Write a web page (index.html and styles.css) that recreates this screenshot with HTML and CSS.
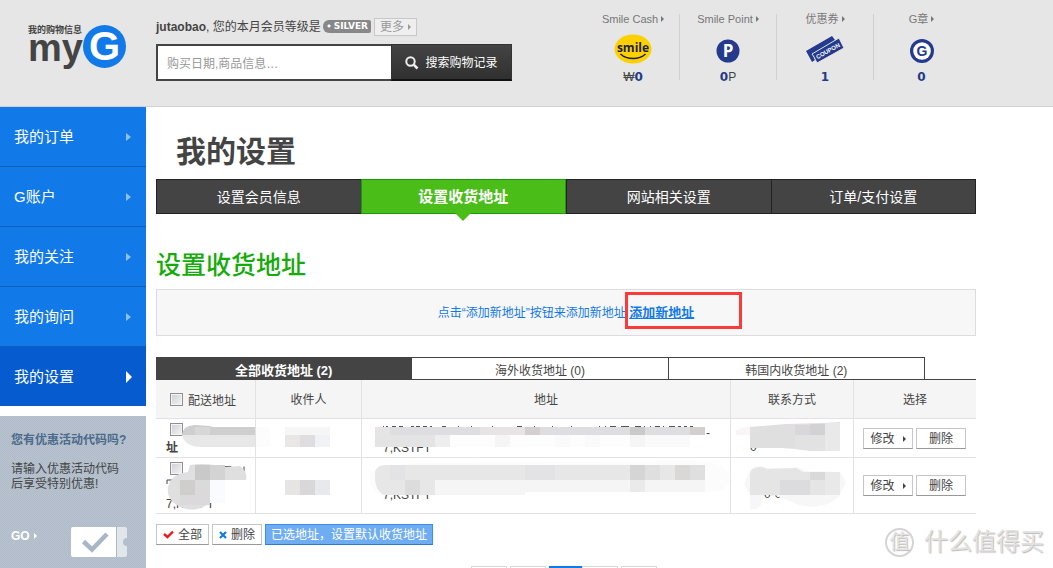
FILE: index.html
```html
<!DOCTYPE html>
<html lang="zh-CN">
<head>
<meta charset="utf-8">
<title>我的设置</title>
<link rel="stylesheet" href="styles.css">
</head>
<body>
<header class="header">
  <a class="logo" href="#">
    <span class="logo-words"><span class="logo-small">我的购物信息</span><span class="logo-my">my</span></span>
    <span class="logo-g">G</span>
  </a>
  <div class="account">
    <div class="member">
      <span><b>jutaobao</b>, 您的本月会员等级是</span>
      <span class="grade">SILVER</span>
      <a class="more" href="#">更多<i class="arrow"></i></a>
    </div>
    <form class="search">
      <input class="search-input" type="text" aria-label="搜索购物记录" placeholder="购买日期,商品信息…">
      <button class="search-button" type="button">
        <svg width="14" height="14" viewBox="0 0 14 14"><circle cx="5.5" cy="5.5" r="4.2" fill="none" stroke="#eee" stroke-width="2"/><path d="M8.7 8.7L12.5 12.5" stroke="#eee" stroke-width="2.6"/></svg>
        搜索购物记录
      </button>
    </form>
  </div>
  <ul class="wallet">
    <li class="wallet-item">
      <a href="#">Smile Cash<i class="arrow"></i></a>
      <svg width="38" height="30" viewBox="0 0 38 30"><ellipse cx="19" cy="15" rx="18.500" ry="14.500" fill="#fdd000"/><text x="19" y="18" text-anchor="middle" class="smile-text">smile</text><path d="M6.500 20C13 26 25 26 31.500 20" fill="none" stroke="#1b1f4a" stroke-width="1.500"/></svg>
      <span class="value"><span>₩</span><b>0</b></span>
    </li>
    <li class="wallet-item">
      <a href="#">Smile Point<i class="arrow"></i></a>
      <svg width="24" height="30" viewBox="0 0 24 30"><circle cx="12" cy="17" r="11.500" fill="#243a8c"/><text x="12" y="23" text-anchor="middle" class="point-text">P</text></svg>
      <span class="value"><b>0</b><span>P</span></span>
    </li>
    <li class="wallet-item">
      <a href="#">优惠券<i class="arrow"></i></a>
      <svg width="40" height="30" viewBox="0 0 40 30"><path d="M1 17L27 2l3 4-2 3-20 12 2 5-3 2z" fill="#243a8c"/><path d="M7 20L34 4l2 4 1 2 2 4-27 15-2-4-1-2z" fill="#243a8c" stroke="#e6e6e6"/><text x="23" y="19" text-anchor="middle" transform="rotate(-29 23 17)" class="coupon-text">COUPON</text></svg>
      <span class="value"><b>1</b></span>
    </li>
    <li class="wallet-item">
      <a href="#">G章<i class="arrow"></i></a>
      <svg width="24" height="30" viewBox="0 0 24 30"><circle cx="12" cy="17" r="12" fill="#243a8c"/><circle cx="12" cy="17" r="8.800" fill="#fff"/><text x="12" y="22" text-anchor="middle" class="stamp-text">G</text></svg>
      <span class="value"><b>0</b></span>
    </li>
  </ul>
</header>

<div class="page">
  <aside class="sidebar">
    <nav class="menu">
      <a href="#">我的订单<i class="menu-arrow"></i></a>
      <a href="#">G账户<i class="menu-arrow"></i></a>
      <a href="#">我的关注<i class="menu-arrow"></i></a>
      <a href="#">我的询问<i class="menu-arrow"></i></a>
      <a href="#" class="current">我的设置<i class="menu-arrow"></i></a>
    </nav>
    <section class="promo">
      <h3>您有优惠活动代码吗?</h3>
      <p>请输入优惠活动代码后享受特别优惠!</p>
      <div class="promo-foot">
        <a href="#">GO<i class="arrow"></i></a>
        <svg width="56" height="30" viewBox="0 0 56 30"><path d="M2 0H45V30H2Q0 30 0 28V2Q0 0 2 0Z" fill="#fff"/><path d="M46 0H54Q56 0 56 2V11A4 4 0 0 0 56 19V28Q56 30 54 30H46Z" fill="#e1e6eb"/><path d="M45.500 0V30" stroke="#a9b6c5" stroke-dasharray="1 1"/><path d="M12.500 14.500L21 22.500 36 7" fill="none" stroke="#a9b6c6" stroke-width="4.500"/></svg>
      </div>
    </section>
  </aside>

  <main class="main">
    <h1>我的设置</h1>
    <nav class="tabs">
      <a href="#">设置会员信息</a>
      <a href="#" class="selected">设置收货地址</a>
      <a href="#">网站相关设置</a>
      <a href="#">订单/支付设置</a>
    </nav>
    <h2>设置收货地址</h2>
    <p class="notice">点击“添加新地址”按钮来添加新地址 <a href="#">添加新地址<i class="highlight"></i></a></p>

    <div class="subtabs-row">
      <nav class="subtabs">
        <a href="#" class="selected">全部收货地址 (2)</a>
        <a href="#">海外收货地址 (0)</a>
        <a href="#">韩国内收货地址 (2)</a>
      </nav>
    </div>
    <table class="addresses">
      <colgroup><col class="col-name"><col class="col-person"><col><col class="col-contact"><col class="col-actions"></colgroup>
      <thead>
        <tr><th class="first"><label><input type="checkbox" class="tick">配送地址</label></th><th>收件人</th><th>地址</th><th>联系方式</th><th>选择</th></tr>
      </thead>
      <tbody>
        <tr class="row-short">
          <td class="first"><input type="checkbox" class="tick" aria-label="选择地址 1"><br><b>址</b>
            <svg class="mask" width="99" height="38"><path d="M26 16Q27 6 40 6L54 7 56 8H99V16Z" fill="#cecece"/><path d="M26 16H99V28H45Q29 28 26 16Z" fill="#e7e7e7"/><path d="M39 8h15v8H39z" fill="#d7d7d7"/></svg></td>
          <td><svg class="mask" width="105" height="38"><path d="M0 8h14v20H0z" fill="#fcfcfc"/><path d="M29 8h45v8H29z" fill="#f6f6f6"/><path d="M29 16h15v12H29z" fill="#e9e7e5"/><path d="M44 16h15v12H44z" fill="#e0dde1"/><path d="M59 16h15v12H59z" fill="#f1f2f5"/></svg></td>
          <td class="address"><p class="tail">-</p><p>7,KSTFT</p>
            <svg class="mask" width="368" height="38"><path d="M21 7.500h1m2 0h2m4 0h4m3 0h4m8 0h3m2 0h4m3 0h4m3 0h2m10 0h4m12 0h1m12 0h1m20 0h1m24 0h5m12 0h1m17 0h1m18 0h1m27 0h1m5 0h1m4 0h6m5 0h8m6 0h6m3 0h1m5 0h1m4 0h5m3 0h1m5 0h6m3 0h3m3 0h3m3 0h3" stroke="#555"/><path d="M13 8h330v8H13z" fill="#dedddf"/><path d="M13 8h15v8H13zM118 8h45v8h-45z" fill="#e7e4e6"/><path d="M163 8h15v8h-15zM328 8h15v8h-15z" fill="#d2cfcf"/><path d="M268 8h15v8h-15z" fill="#cbcacb"/><path d="M13 16h60v12H13z" fill="#e4e4e4"/><path d="M73 16h15v12H73z" fill="#eee"/><path d="M88 16h240v12H88z" fill="#fdfdfd"/><path d="M133 16h15v12h-15zM268 16h15v12h-15z" fill="#f5f5f5"/><path d="M193 16h15v12h-15zM223 16h15v12h-15zM283 16h45v12h-45z" fill="#fafafa"/></svg></td>
          <td class="contact"><p>0</p><svg class="mask" width="122" height="38"><path d="M4 12Q8 8 19 8V16H5Z" fill="#faf6f7"/><path d="M19 8L55 5 91 4 109 3V32L80 31 50 29H19Z" fill="#dfdfe0"/><path d="M64 16H109V32H79L64 30Z" fill="#e2e2e2"/><path d="M64 6h15v10H64z" fill="#d9d7d9"/><path d="M79 5h15v11H79z" fill="#d2d2d5"/><path d="M94 4h15v28H94z" fill="#e9e9e9"/></svg></td>
          <td class="actions"><div class="action-list"><button type="button" class="button">修改<i class="arrow"></i></button><button type="button" class="button">删除</button></div></td>
        </tr>
        <tr class="row-tall">
          <td class="first"><input type="checkbox" class="tick" aria-label="选择地址 2"><br><br><span>7,KSTFT</span>
            <svg class="mask" width="99" height="54"><path d="M67 8.500h8v5m6-4v4m7-5v5M11 26v-4h5" fill="none" stroke="#444"/><path d="M12 30Q14 16 32 14L34 7Q52 4 65 9L84 8Q92 14 90 22H69V45H54Q40 55 27 50 10 43 12 30Z" fill="#dfdfdf"/><path d="M39 7h15v15H39z" fill="#c9c9c9"/><path d="M54 7h15v15H54z" fill="#d3d3d3"/><path d="M24 22h15v15H24z" fill="#cfcecd"/><path d="M39 22h15v15H39z" fill="#dadada"/><path d="M54 22h15v23H54z" fill="#f9fbff"/><path d="M24 37h30v10H24z" fill="#dbd9dc"/></svg></td>
          <td><svg class="mask" width="105" height="54"><path d="M29 22h15v15H29z" fill="#e6e5e3"/><path d="M44 22h15v15H44z" fill="#d8d7d9"/><path d="M59 22h15v15H59z" fill="#e8e9ec"/></svg></td>
          <td class="address"><p>7,KSTFT</p>
            <svg class="mask" width="368" height="54"><path d="M8 14Q14 5 80 5L330 3Q366 4 368 19T343 34H80L60 37H18Q7 31 8 14Z" fill="#fcfcfc"/><path d="M13 14Q15 7 23 7H343V22H13Z" fill="#e7e7e8"/><path d="M13 22H73V37H22Q14 33 13 22Z" fill="#e7e7e7"/><path d="M73 22H343V34H163V37H73Z" fill="#f4f5f4"/><path d="M28 7h15v15H28zM163 7h30v15h-30z" fill="#e3e2e5"/><path d="M268 7h15v15h-15z" fill="#d5d5d5"/><path d="M283 7h15v15h-15zM328 7h15v15h-15z" fill="#dfdfdf"/><path d="M313 7h15v15h-15z" fill="#dad8d6"/><path d="M43 22h15v15H43z" fill="#dcdcdc"/><path d="M268 22h15v12h-15z" fill="#eaeaea"/></svg></td>
          <td class="contact low"><p>0-0</p><svg class="mask" width="122" height="54"><path d="M13 26L19 12Q24 6 34 10H60Q68 7 74 13L109 14 115 24 108 38Q93 53 68 47L44 37H33Q31 53 19 51V37Z" fill="#f7f7f7"/><path d="M19 16Q20 8 32 9L36 11 65 10 72 14H109V37H19Z" fill="#e5e5e5"/><path d="M79 14h15v8H79z" fill="#d9d9da"/><path d="M49 22h30v15H49z" fill="#dcdcde"/><path d="M94 14h15v23H94z" fill="#e9e9e9"/></svg></td>
          <td class="actions"><div class="action-list"><button type="button" class="button">修改<i class="arrow"></i></button><button type="button" class="button">删除</button></div></td>
        </tr>
      </tbody>
    </table>
    <div class="bulk">
      <button type="button" class="button"><svg width="11" height="9" viewBox="0 0 11 9"><path d="M1 4L4.500 7 10 1.500" fill="none" stroke="#f01818" stroke-width="2.400"/></svg>全部</button>
      <button type="button" class="button"><svg width="8" height="8" viewBox="0 0 8 8"><path d="M1 1L7 7M7 1L1 7" stroke="#1279e9" stroke-width="2.200"/></svg>删除</button>
      <button type="button" class="button primary">已选地址，设置默认收货地址</button>
    </div>
    <nav class="pager">
      <button type="button" aria-label="第一页"></button><button type="button" aria-label="上一页"></button><span><button type="button" class="on" aria-label="第 1 页"></button><button type="button" aria-label="下一页"></button></span><button type="button" aria-label="最后一页"></button>
    </nav>
  </main>
</div>
<div class="watermark"><span class="watermark-mark">值</span><span>什么值得买</span></div>
</body>
</html>
```

FILE: styles.css
```css
* { box-sizing: border-box; }
body {
  margin: 0;
  height: 100vh;
  overflow: hidden;
  display: flex;
  flex-direction: column;
  position: relative;
  background: #fff;
  color: #444;
  font: 12px/18px "Liberation Sans", "Noto Sans CJK SC", sans-serif;
}
a { color: inherit; text-decoration: none; }
h1, h2, h3, p, ul { margin: 0; padding: 0; }
button, input { font: inherit; color: inherit; }
svg { flex: none; }

.arrow {
  display: inline-block;
  border: 3px solid transparent;
  border-left-color: currentColor;
  border-right: 0;
  margin-left: 4px;
  vertical-align: 1px;
}

/* header */
.header {
  flex: none;
  display: flex;
  align-items: flex-start;
  background: #e6e6e6;
  border-bottom: 1px solid #d2d2d2;
  min-height: 107px;
}
.logo { flex: none; display: flex; width: 156px; padding: 25px 0 0 28px; }
.logo-words { display: flex; flex-direction: column; width: 55px; white-space: nowrap; font-weight: bold; }
.logo-small { font-size: 9px; line-height: 10px; }
.logo-my { font-size: 38px; line-height: 26px; }
.logo-g {
  width: 43px;
  height: 43px;
  border-radius: 50%;
  background: #1279e9;
  color: #fff;
  font-size: 40px;
  font-weight: bold;
  line-height: 43px;
  text-align: center;
}
.account { flex: none; width: 356px; padding-top: 17px; }
.member { display: flex; align-items: center; height: 20px; margin-bottom: 7px; white-space: nowrap; }
.grade {
  margin: 0 3px 2px 2px;
  padding: 0 3px 0 11px;
  background: radial-gradient(circle at 6px 6px, #fff 1px, #888 2px);
  border-radius: 6px 2px 2px 6px;
  color: #fff;
  font: bold 9px/13px "DejaVu Sans", sans-serif;
}
.more { border: 1px solid #c8c8c8; background: #efefef; color: #999; padding: 0 5px; line-height: 16px; }
.search { display: flex; height: 37px; }
.search-input {
  flex: 1;
  min-width: 0;
  border: 2px solid #444;
  border-right: 0;
  border-radius: 0;
  padding: 2px 9px 0;
  background: #fff;
  outline: 0;
}
.search-input::placeholder { color: #999; }
.search-button {
  width: 121px;
  border: 1px solid #333;
  border-bottom: 2px solid #111;
  background: linear-gradient(#444, #303030);
  color: #fff;
  display: flex;
  align-items: center;
  justify-content: center;
  gap: 6px;
  padding: 2px 0 0;
}
.wallet { display: flex; list-style: none; margin: 14px 0 0 71px; }
.wallet-item {
  width: 97px;
  height: 66px;
  display: flex;
  flex-direction: column;
  align-items: center;
  border-right: 1px solid #d0d0d0;
}
.wallet-item:first-child { padding-left: 4px; }
.wallet-item:last-child { border-right: 0; width: 95px; }
.wallet-item a { font-size: 11px; line-height: 10px; margin-bottom: 10px; color: #777; white-space: nowrap; }
.wallet-item .arrow { margin-left: 3px; }
.value { line-height: 20px; margin-top: 3px; font-size: 12px; }
.value b { color: #243a8c; font: bold 12px "DejaVu Sans", sans-serif; }
.smile-text { font: bold 12px "Open Sans", sans-serif; fill: #1b1f4a; }
.point-text { font: bold 17px "Open Sans", sans-serif; fill: #fff; }
.coupon-text { font: bold 6px "Liberation Sans", sans-serif; fill: #fff; }
.stamp-text { font: bold 14px "Liberation Sans", sans-serif; fill: #243a8c; }

/* sidebar */
.page { flex: 1; display: flex; min-height: 0; }
.sidebar { flex: none; width: 146px; display: flex; flex-direction: column; gap: 10px; }
.menu a {
  display: flex;
  align-items: center;
  height: 60px;
  padding-left: 14px;
  background: #1279e9;
  border-bottom: 1px solid #0c5fba;
  color: #fff;
  font-size: 15px;
}
.menu .current { height: 59px; background: #065bcf; border-bottom: 0; }
.menu-arrow { margin: 0 15px 0 auto; border: 4px solid transparent; border-left: 5px solid #90bff4; border-right: 0; }
.current .menu-arrow { margin-right: 14px; border-width: 6px; border-left-color: #fff; border-right: 0; }
.promo { flex: 1; padding: 15px 19px 0 11px; background: repeating-conic-gradient(#b9c4d0 0 25%, #aebac8 0 50%) 0 0 / 2px 2px; }
.promo h3 { font-size: 12px; line-height: 18px; color: #4c6a8c; white-space: nowrap; }
.promo p { margin-top: 13px; padding-right: 6px; line-height: 15px; }
.promo-foot { display: flex; align-items: center; justify-content: space-between; margin-top: 35px; }
.promo-foot a { color: #fff; font-weight: bold; margin-bottom: 12px; }

/* main column */
.main { flex: 1; max-width: 907px; padding: 0 77px 0 10px; }
h1 { padding: 27px 0 0 20px; font-size: 30px; line-height: 36px; margin-bottom: 9px; }
.tabs { display: flex; height: 35px; }
.tabs a {
  flex: 1;
  position: relative;
  display: flex;
  align-items: center;
  justify-content: center;
  background: #444;
  border: 1px solid #222;
  border-right-width: 0;
  color: #fff;
  font-size: 14px;
}
.tabs a:last-child { border-right-width: 1px; }
.tabs .selected { background: #4abd18; border-color: #1a9a10; border-right-width: 1px; font-size: 15px; font-weight: bold; }
.tabs .selected::after {
  content: "";
  position: absolute;
  left: 50%;
  top: 100%;
  margin-left: -8px;
  border: 8px solid transparent;
  border-top-color: #4abd18;
  border-bottom: 0;
}
h2 { margin: 34px 0 7px; color: #15ab0a; font-size: 25px; font-weight: 500; line-height: 34px; }
.notice {
  border: 1px solid #ddd;
  background: #f7f7f7;
  color: #1279e9;
  text-align: center;
  padding-top: 2px;
  line-height: 43px;
}
.notice a { position: relative; display: inline-block; font-size: 13px; font-weight: bold; line-height: 18px; text-decoration: underline; }
.highlight { position: absolute; left: -4px; top: -12px; width: 117px; height: 37px; border: 3px solid #fb3a3a; }
.subtabs-row { margin-top: 21px; border-bottom: 1px solid #444; }
.subtabs { display: flex; max-width: 769px; height: 22px; }
.subtabs a {
  flex: 1;
  border: 1px solid #444;
  border-width: 1px 1px 0 0;
  text-align: center;
  line-height: 26px;
}
.subtabs .selected { background: #444; color: #fff; font-size: 13px; font-weight: bold; }

/* address table */
.addresses { width: 100%; table-layout: fixed; border-collapse: separate; border-spacing: 0; }
.col-name { width: 100px; }
.col-person { width: 106px; }
.col-contact { width: 123px; }
.col-actions { width: 122px; }
.addresses th, .addresses td {
  position: relative;
  padding: 0;
  border: 0 solid #e2e2e2;
  border-width: 0 1px 1px 0;
  font-weight: normal;
}
.addresses th { height: 39px; padding-top: 1px; background: #f5f5f5; text-align: center; }
.addresses th:last-child, .addresses td:last-child { border-right-width: 0; }
.addresses .first { text-align: left; padding: 4px 0 0 10px; line-height: 17px; }
.row-short td { height: 39px; }
.row-short .first, .row-tall .first { vertical-align: top; }
.row-tall td { height: 55px; }
.tick {
  appearance: none;
  width: 13px;
  height: 13px;
  margin: 0 5px 0 4px;
  border: 1px solid #8e8f8f;
  background: linear-gradient(135deg, #cbcfd5, #f4f4f4);
  box-shadow: inset 0 0 0 1px #f4f4f4;
  vertical-align: -1px;
}
.mask { position: absolute; left: 0; top: 0; overflow: visible; }
.addresses .address { padding: 6px 20px 0 21px; line-height: 15px; }
.row-tall .address { padding-top: 20px; }
.tail { text-align: right; }
.addresses .contact { padding: 18px 0 0 19px; line-height: 15px; }
.addresses .low { padding: 18px 0 0 33px; }
.action-list { display: flex; justify-content: center; gap: 3px; padding-right: 1px; }
.button {
  height: 21px;
  min-width: 50px;
  padding: 1px 5px 0;
  border: 1px solid #c6c6c6;
  border-bottom-color: #999;
  background: #fff;
  line-height: 18px;
  white-space: nowrap;
}
.action-list .arrow { margin-left: 8px; }
.bulk { display: flex; gap: 3px; margin-top: 10px; }
.bulk svg { margin-right: 4px; }
.bulk .button { padding: 1px 6px 0; }
.bulk .primary { padding: 1px 5px 0; border-color: #3d8fe8; border-bottom-color: #2f7ccf; background: #6fadf2; color: #fff; }
.pager { display: flex; justify-content: center; gap: 3px; margin: 21px 4px 0 0; }
.pager span { display: flex; }
.pager button { width: 36px; height: 26px; border: 1px solid #d8d8d8; background: #fff; }
.pager .on { width: 33px; border-color: #1279e9; background: #1279e9; }

.watermark {
  position: absolute;
  right: 9px;
  bottom: 11px;
  display: flex;
  align-items: center;
  gap: 10px;
  color: #e2e2e2;
  font-size: 24px;
  line-height: 30px;
  text-shadow: 1px 1px 1px #bbb;
}
.watermark-mark {
  width: 29px;
  height: 29px;
  border: 2px solid #d4d4d4;
  border-radius: 50%;
  font-size: 20px;
  line-height: 24px;
  text-align: center;
}
```
